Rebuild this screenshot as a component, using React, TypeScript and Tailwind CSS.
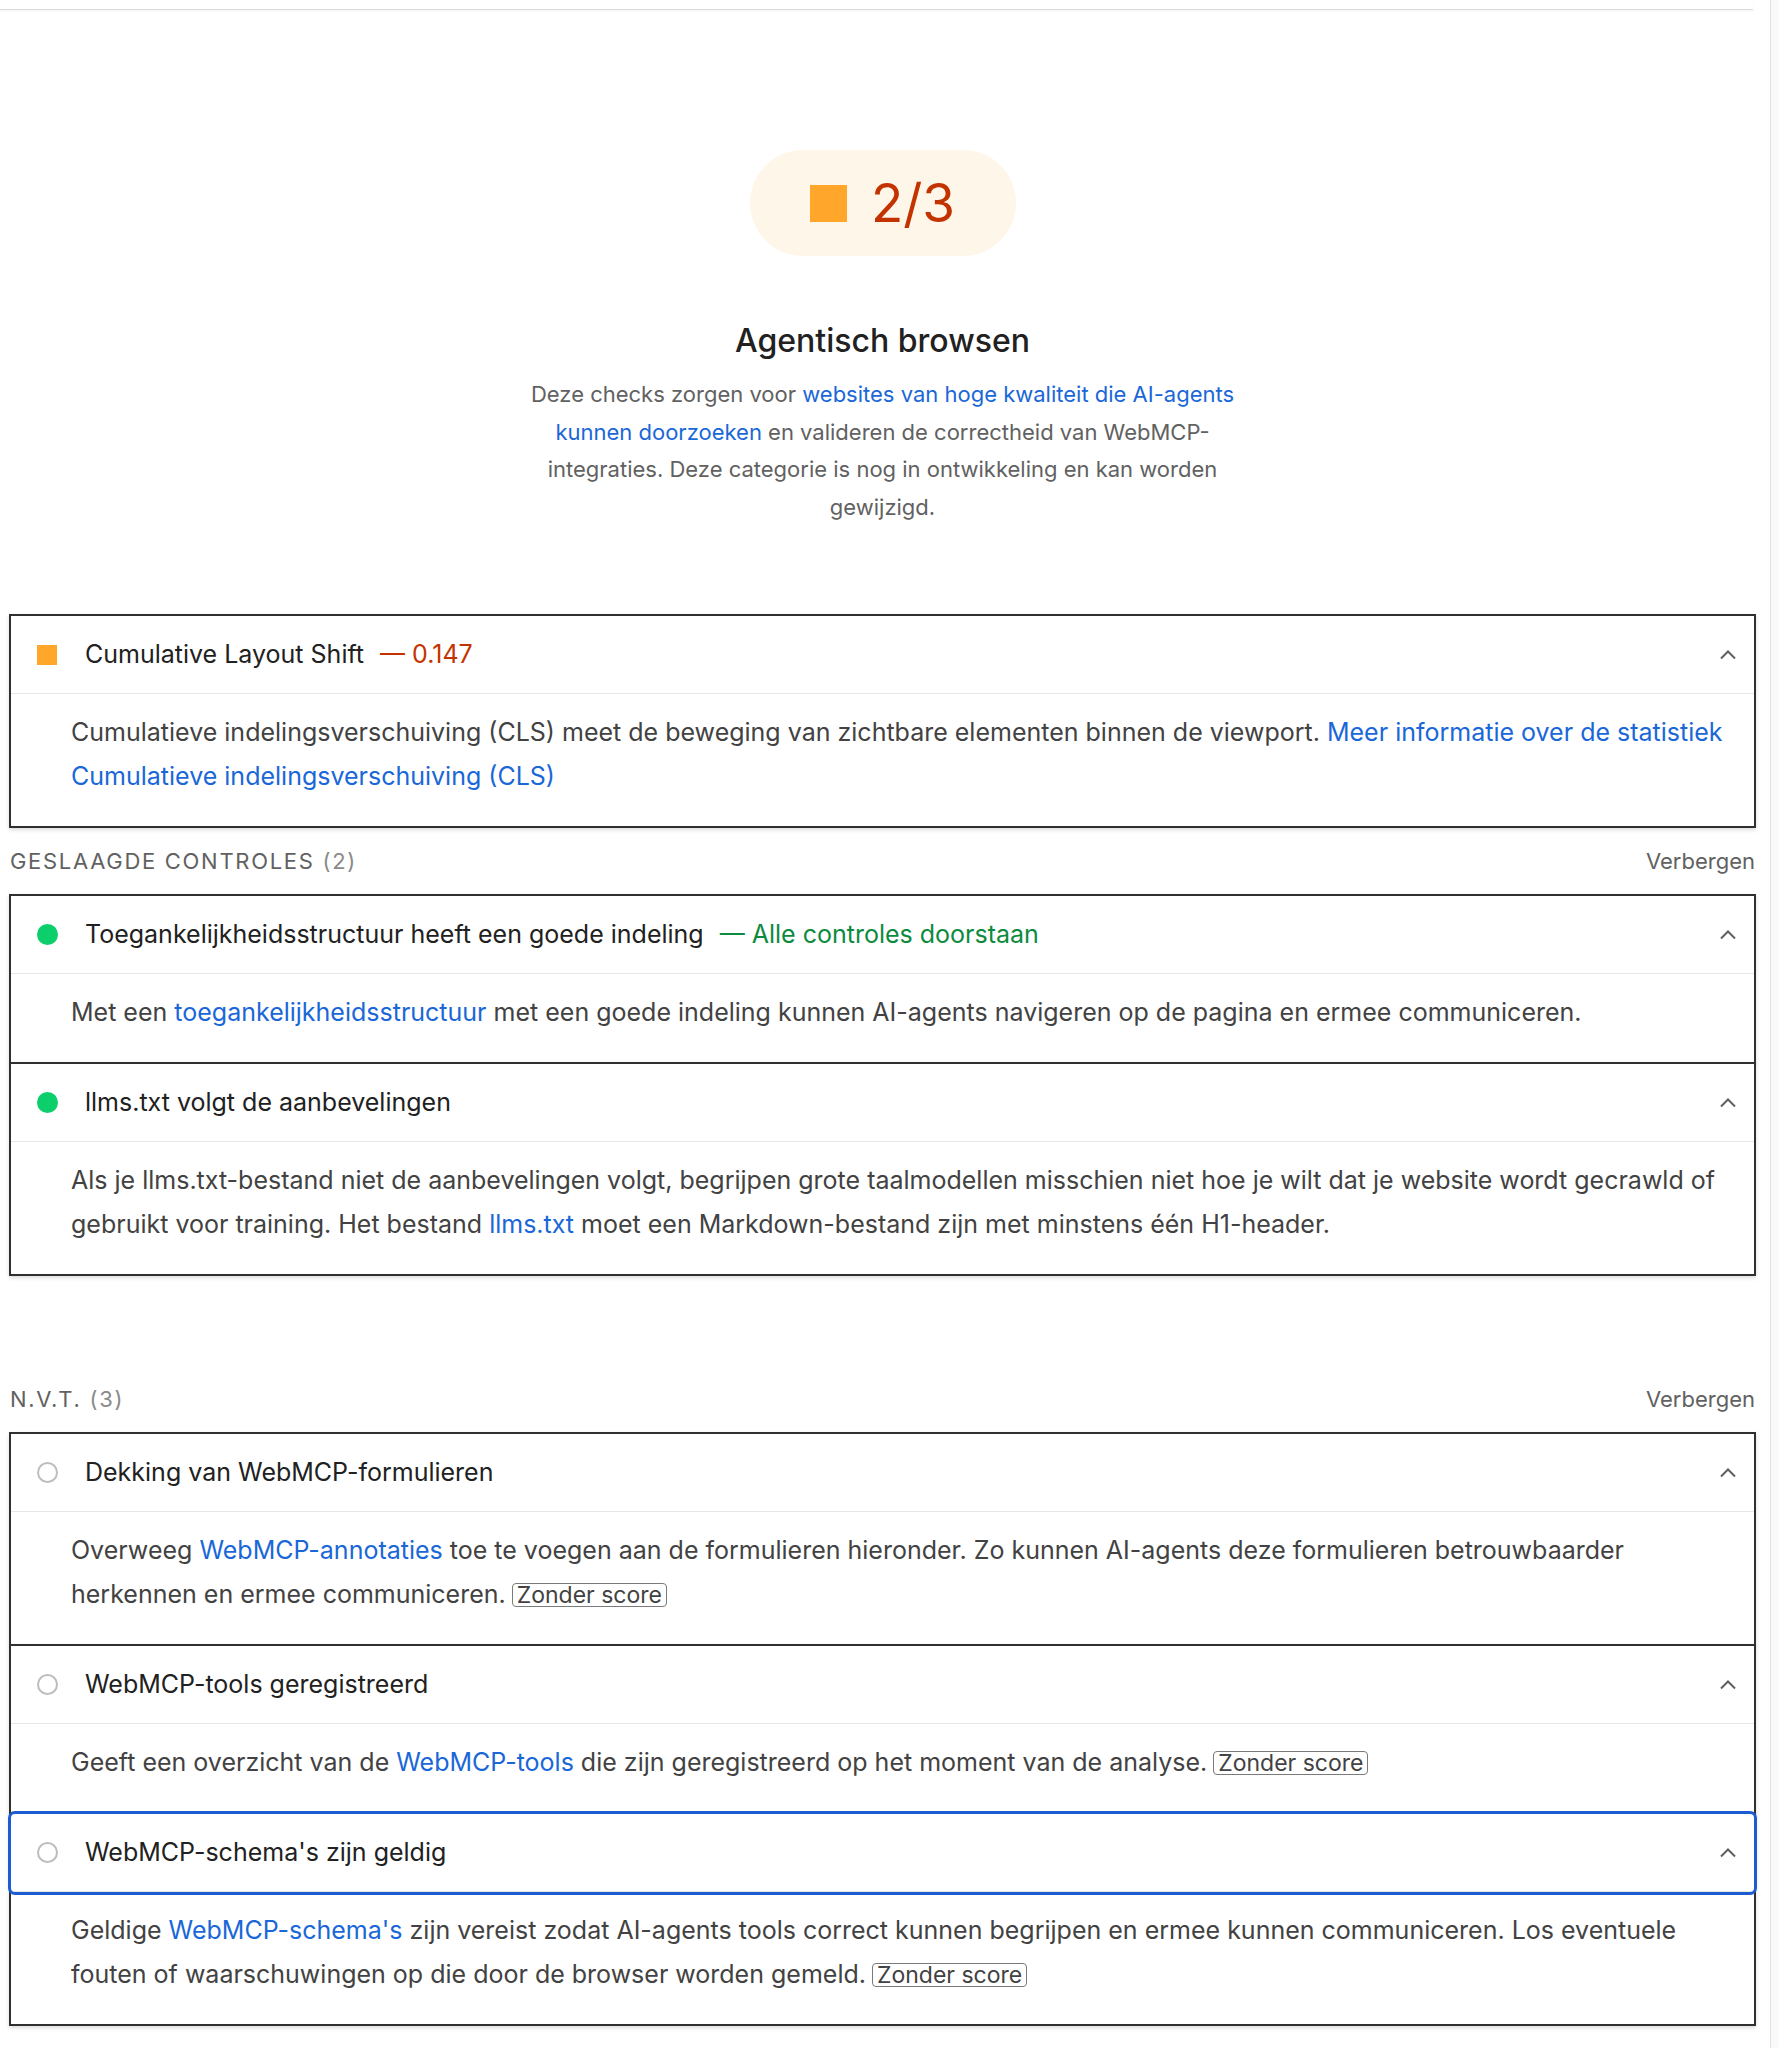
import React from "react";

type Status = "average" | "pass" | "na";

type Audit = {
  title: string;
  suffix?: { text: string; tone: "average" | "pass" };
  body: React.ReactNode;
  unscored?: boolean;
  focused?: boolean;
  status: Status;
};

const A = ({ children }: { children: React.ReactNode }) => (
  <a href="#" className="text-[#1a67d8]">
    {children}
  </a>
);

const StatusIcon = ({ status }: { status: Status }) => {
  if (status === "average") return <span className="block w-[20px] h-[20px] bg-[#ffa62b]" />;
  if (status === "pass") return <span className="block w-[21px] h-[21px] rounded-full bg-[#0cce6b]" />;
  return <span className="block w-[21px] h-[21px] rounded-full border-[2.5px] border-[#bdbdbd]" />;
};

const Chevron = () => (
  <svg width="18" height="11" viewBox="0 0 18 11" fill="none" className="text-[#5f5f5f]">
    <polyline points="2,9.5 9,2.5 16,9.5" stroke="currentColor" strokeWidth="2" />
  </svg>
);

const Unscored = () => (
  <span className="inline-block ml-[6px] px-[4px] border border-[#7a7a7a] rounded-[4px] text-[23px] leading-[22px] text-[#424242]">
    Zonder score
  </span>
);

const AuditRow = ({ audit, first }: { audit: Audit; first: boolean }) => (
  <div
    className={`relative bg-white border-2 border-[#303030] shadow-[0_2px_4px_rgba(0,0,0,0.14)] ${
      first ? "" : "-mt-[2px]"
    }`}
  >
    <div
      className={`relative flex items-center h-[78px] border-b border-[#e6e6e6] pl-[26px] pr-[17px] ${
        audit.focused ? "z-10 rounded-[4px] outline-[3px] outline-offset-[0px] outline-[#1d5bd0]" : ""
      }`}
    >
      <span className="w-[48px] shrink-0 flex">
        <StatusIcon status={audit.status} />
      </span>
      <span className="text-[25px] text-[#212121]">{audit.title}</span>
      {audit.suffix && (
        <span
          className={`ml-[16px] text-[25px] ${
            audit.suffix.tone === "average" ? "text-[#c33300]" : "text-[#0c8a3d]"
          }`}
        >
          — {audit.suffix.text}
        </span>
      )}
      <span className="ml-auto flex">
        <Chevron />
      </span>
    </div>
    <p className="pl-[60px] pr-[15px] pt-[16px] pb-[28px] text-[25px] leading-[44px] text-[#424242]">
      {audit.body}
      {audit.unscored && <Unscored />}
    </p>
  </div>
);

const GroupHeader = ({ label, count }: { label: string; count: number }) => (
  <div className="flex items-center justify-between h-[30px] text-[22px] text-[#616161]">
    <span className="tracking-[1.7px]">
      {label} <span className="text-[#8a8a8a]">({count})</span>
    </span>
    <span>Verbergen</span>
  </div>
);

const cls: Audit = {
  title: "Cumulative Layout Shift",
  suffix: { text: "0.147", tone: "average" },
  status: "average",
  body: (
    <>
      Cumulatieve indelingsverschuiving (CLS) meet de beweging van zichtbare elementen binnen de viewport.{" "}
      <A>Meer informatie over de statistiek Cumulatieve indelingsverschuiving (CLS)</A>
    </>
  ),
};

const passed: Audit[] = [
  {
    title: "Toegankelijkheidsstructuur heeft een goede indeling",
    suffix: { text: "Alle controles doorstaan", tone: "pass" },
    status: "pass",
    body: (
      <>
        Met een <A>toegankelijkheidsstructuur</A> met een goede indeling kunnen AI-agents navigeren op de pagina en
        ermee communiceren.
      </>
    ),
  },
  {
    title: "llms.txt volgt de aanbevelingen",
    status: "pass",
    body: (
      <>
        Als je llms.txt-bestand niet de aanbevelingen volgt, begrijpen grote taalmodellen misschien niet hoe je wilt
        dat je website wordt gecrawld of gebruikt voor training. Het bestand <A>llms.txt</A> moet een Markdown-bestand
        zijn met minstens één H1-header.
      </>
    ),
  },
];

const notApplicable: Audit[] = [
  {
    title: "Dekking van WebMCP-formulieren",
    status: "na",
    unscored: true,
    body: (
      <>
        Overweeg <A>WebMCP-annotaties</A> toe te voegen aan de formulieren hieronder. Zo kunnen AI-agents deze
        formulieren betrouwbaarder herkennen en ermee communiceren.
      </>
    ),
  },
  {
    title: "WebMCP-tools geregistreerd",
    status: "na",
    unscored: true,
    body: (
      <>
        Geeft een overzicht van de <A>WebMCP-tools</A> die zijn geregistreerd op het moment van de analyse.
      </>
    ),
  },
  {
    title: "WebMCP-schema's zijn geldig",
    status: "na",
    unscored: true,
    focused: true,
    body: (
      <>
        Geldige <A>WebMCP-schema's</A> zijn vereist zodat AI-agents tools correct kunnen begrijpen en ermee kunnen
        communiceren. Los eventuele fouten of waarschuwingen op die door de browser worden gemeld.
      </>
    ),
  },
];

export default function App() {
  return (
    <div className="flex min-h-screen bg-white font-['Inter',sans-serif] antialiased">
      <main className="w-[1770px] shrink-0 pb-[20px]">
        {/* sticky toolbar edge */}
        <div className="h-[10px] w-[1753px] border-b border-[#dddddd] shadow-[0_1px_2px_rgba(0,0,0,0.06)]" />

        <div className="pl-[9px] pr-[14px]">
          {/* category score */}
          <section className="flex flex-col items-center">
            <div className="mt-[140px] flex items-center justify-center gap-[24px] w-[266px] h-[106px] rounded-full bg-[#fff6ea]">
              <span className="block w-[37px] h-[37px] bg-[#ffa62b]" />
              <span className="text-[53px] leading-none text-[#c33300]">2/3</span>
            </div>
            <h2 className="mt-[65px] text-[32px] leading-[40px] font-medium text-[#212121]">Agentisch browsen</h2>
            <p className="mt-[15px] max-w-[740px] text-center text-[22px] leading-[37.5px] text-[#616161]">
              Deze checks zorgen voor <A>websites van hoge kwaliteit die AI-agents kunnen doorzoeken</A> en valideren
              de correctheid van WebMCP-integraties. Deze categorie is nog in ontwikkeling en kan worden gewijzigd.
            </p>
          </section>

          <div className="mt-[88px]">
            <AuditRow audit={cls} first />
          </div>

          <div className="mt-[18px] mb-[18px] pl-[1px] pr-[1px]">
            <GroupHeader label="GESLAAGDE CONTROLES" count={2} />
          </div>
          {passed.map((a, i) => (
            <AuditRow key={a.title} audit={a} first={i === 0} />
          ))}

          <div className="mt-[108px] mb-[18px] pl-[1px] pr-[1px]">
            <GroupHeader label="N.V.T." count={3} />
          </div>
          {notApplicable.map((a, i) => (
            <AuditRow key={a.title} audit={a} first={i === 0} />
          ))}
        </div>
      </main>
      {/* scrollbar gutter */}
      <div className="flex-1 border-l border-[#e2e2e2] bg-[#fafafa]" />
    </div>
  );
}
